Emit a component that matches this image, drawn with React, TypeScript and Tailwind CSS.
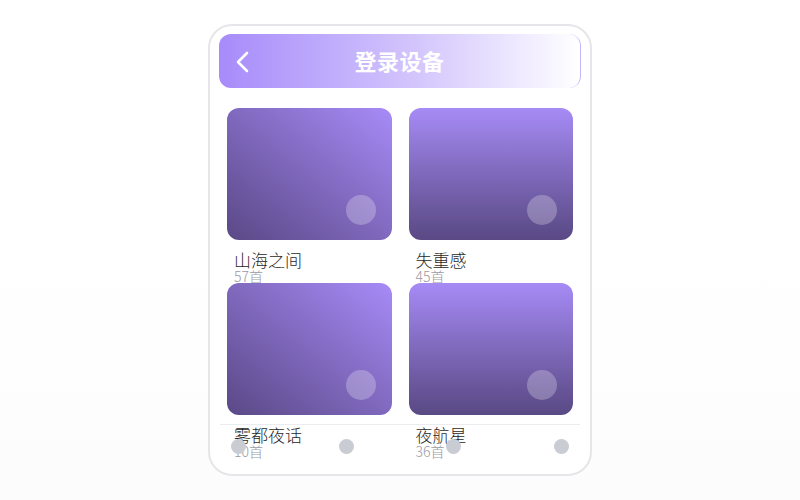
import React from "react";

const items = [
  { title: "山海之间", count: "57首", dir: "tr" },
  { title: "失重感", count: "45首", dir: "b" },
  { title: "雾都夜话", count: "10首", dir: "tr" },
  { title: "夜航星", count: "36首", dir: "b" },
];

export default function App() {
  return (
    <div
      className="w-[800px] h-[500px] flex items-center justify-center bg-gradient-to-b from-white from-50% to-[#fcfcfc]"
      style={{ fontFamily: '"Noto Sans CJK SC", "Noto Sans", sans-serif' }}
    >
      <div className="relative w-[384px] h-[452px] rounded-[24px] border-2 border-[#e6e6ea] bg-white p-[9px] pt-[8px] overflow-hidden">
        <div className="relative h-[54px] rounded-xl border-r border-[#c4b5fd] bg-gradient-to-r from-[#a78bfa] via-[#d4c6fc] via-55% to-white flex items-center justify-center">
          <svg
            className="absolute left-[17px] top-[17px]"
            width="14"
            height="22"
            viewBox="0 0 14 22"
            fill="none"
          >
            <polyline
              points="11,2 2,11 11,20"
              stroke="white"
              strokeWidth="2.6"
              strokeLinecap="round"
              strokeLinejoin="round"
            />
          </svg>
          <span className="text-white font-bold text-[22px] leading-none tracking-[0.5px] -mt-[3px]">
            登录设备
          </span>
        </div>

        <div className="mx-[8px] mt-[20px] grid grid-cols-2 gap-x-[17px]">
          {items.map((it) => (
            <div key={it.title} className="h-[175px] flex flex-col">
              <div
                className={
                  "relative h-[132px] rounded-xl " +
                  (it.dir === "tr"
                    ? "bg-gradient-to-tr from-[#5a4987] to-[#a88bf8]"
                    : "bg-gradient-to-b from-[#a68bf6] to-[#594984]")
                }
              >
                <div className="absolute right-[16px] bottom-[15px] w-[30px] h-[30px] rounded-full bg-white/25" />
              </div>
              <div className="mt-[11px] pl-[7px] text-[17px] font-light leading-[18px] text-[#1f1f24]">
                {it.title}
              </div>
              <div className="pl-[7px] text-[14px] font-light leading-[14px] text-[#9a9aa3]">
                {it.count}
              </div>
            </div>
          ))}
        </div>

        <div className="absolute left-[10px] right-[10px] top-[398px] h-[44px] border-t border-[#ececf0] flex items-center justify-between px-[11px]">
          <div className="w-[15px] h-[15px] rounded-full bg-[#c9ccd3]" />
          <div className="w-[15px] h-[15px] rounded-full bg-[#c9ccd3]" />
          <div className="w-[15px] h-[15px] rounded-full bg-[#c9ccd3]" />
          <div className="w-[15px] h-[15px] rounded-full bg-[#c9ccd3]" />
        </div>
      </div>
    </div>
  );
}
